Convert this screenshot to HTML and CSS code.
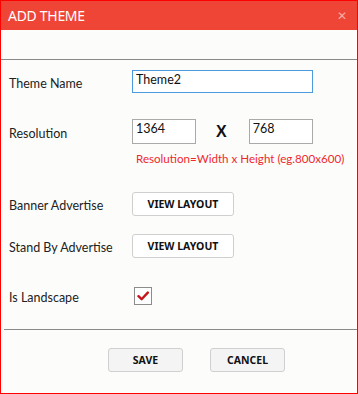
FILE: index.html
```html
<!DOCTYPE html>
<html lang="en">
<head>
    <meta charset="UTF-8">
    <meta name="viewport" content="width=device-width, initial-scale=1.0">
    <title>Add Theme</title>
    <link rel="stylesheet" href="styles.css">
</head>
<body>
    <div class="window">
        <div class="titlebar">
            <span class="title">ADD THEME</span>
            <span class="close">&#x2715;</span>
        </div>
        <div class="subbar"></div>

        <div class="form">
            <div class="row row-name">
                <label class="label">Theme Name</label>
                <input class="field field-name" type="text" value="Theme2">
            </div>

            <div class="row row-res">
                <label class="label">Resolution</label>
                <input class="field field-small" type="text" value="1364">
                <span class="times">X</span>
                <input class="field field-small" type="text" value="768">
            </div>
            <div class="hint">Resolution=Width x Height (eg.800x600)</div>

            <div class="row row-banner">
                <label class="label">Banner Advertise</label>
                <button class="btn btn-layout">VIEW LAYOUT</button>
            </div>

            <div class="row row-standby">
                <label class="label">Stand By Advertise</label>
                <button class="btn btn-layout">VIEW LAYOUT</button>
            </div>

            <div class="row row-landscape">
                <label class="label">Is Landscape</label>
                <span class="checkbox">
                    <svg width="12" height="10" viewBox="0 0 12 10">
                        <path d="M1.5 5.2 L4.6 8.2 L10.8 1.6" fill="none" stroke="#c4161c" stroke-width="2.4" stroke-linecap="round" stroke-linejoin="round"/>
                    </svg>
                </span>
            </div>
        </div>

        <div class="footer">
            <button class="btn btn-action">SAVE</button>
            <button class="btn btn-action">CANCEL</button>
        </div>
    </div>
</body>
</html>
```

FILE: styles.css
```css
* {
    box-sizing: border-box;
}

body {
    margin: 0;
    font-family: Lato, "Noto Sans", sans-serif;
    font-size: 12.5px;
    color: #222;
}

.window {
    width: 358px;
    height: 394px;
    border: 1px solid #ff0000;
    background-color: #fcfdfb;
}

.titlebar {
    height: 29px;
    background-color: #ee4536;
    display: flex;
    align-items: center;
    justify-content: space-between;
    padding: 0 10px 0 7px;
}

.title {
    color: #fff;
    font-family: "Noto Sans", sans-serif;
    font-size: 14px;
    letter-spacing: -0.3px;
}

.close {
    color: #f7aca4;
    font-size: 12px;
}

.subbar {
    height: 30px;
    border-bottom: 1px solid #8a8a8a;
}

.form {
    padding: 10px 0 0 8px;
}

.row {
    display: flex;
    align-items: center;
}

.label {
    width: 123px;
    padding-top: 3px;
}

.field {
    font-family: inherit;
    font-size: 12.5px;
    color: #111;
    background-color: #fff;
    border: 1px solid #aaaaaa;
    padding: 0 3px 5px;
    margin: 0;
    outline: none;
}

.row-name {
    height: 23px;
}

.field-name {
    width: 181px;
    height: 23px;
    border-color: #4a9be0;
}

.row-res {
    margin-top: 26px;
    height: 25px;
}

.field-small {
    width: 64px;
    height: 25px;
    padding-bottom: 7px;
}

.times {
    font-family: "Liberation Sans", Arial, sans-serif;
    font-weight: bold;
    font-size: 16px;
    color: #111;
    margin: 0 22px 0 20px;
}

.hint {
    margin: 7px 0 0 127px;
    color: #f0282d;
    font-size: 11.6px;
    line-height: 16px;
    white-space: nowrap;
}

.btn {
    font-family: "Noto Sans", sans-serif;
    font-weight: bold;
    font-size: 10.5px;
    color: #111;
    border: 1px solid #cfcfcf;
    border-radius: 3px;
    padding: 0;
    margin: 0;
}

.btn-layout {
    width: 102px;
    height: 24px;
    background-color: #fff;
}

.row-banner {
    margin-top: 25px;
}

.row-standby {
    margin-top: 18px;
}

.row-landscape {
    margin-top: 29px;
}

.checkbox {
    width: 18px;
    height: 18px;
    margin-left: 2px;
    border: 1px solid #8c8c8c;
    background-color: #fff;
    display: flex;
    align-items: center;
    justify-content: center;
}

.footer {
    margin: 24px 0 0 3px;
    border-top: 1px solid #8a8a8a;
    padding: 18px 0 0 104px;
    display: flex;
    gap: 27px;
}

.btn-action {
    width: 75px;
    height: 24px;
    background-color: #f4f4f4;
}
```
